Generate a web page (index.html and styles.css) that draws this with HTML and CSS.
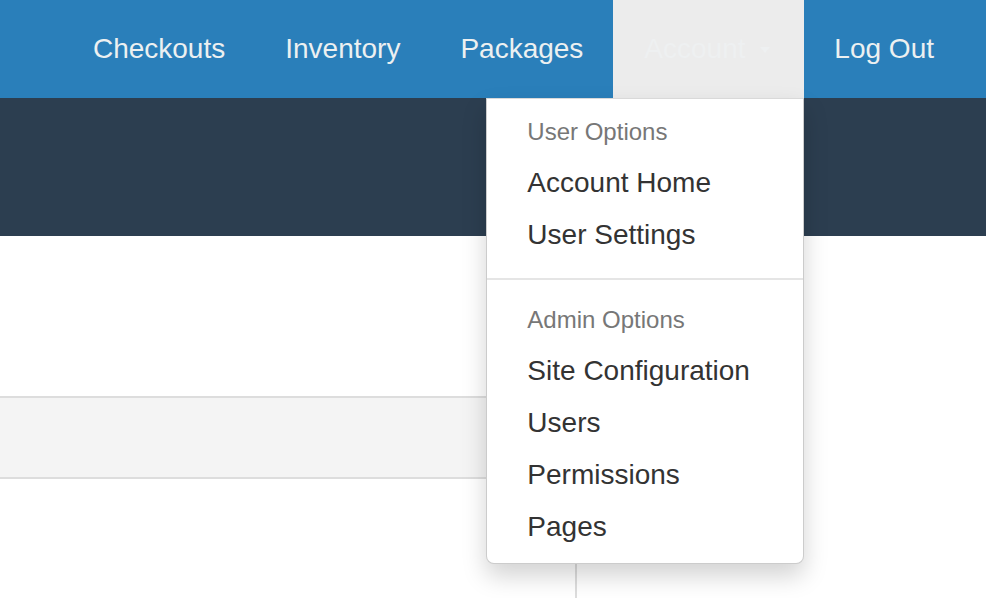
FILE: index.html
```html
<!DOCTYPE html>
<html lang="en">
<head>
<meta charset="utf-8">
<title>Account</title>
<link rel="stylesheet" href="styles.css">
</head>
<body>
<nav class="navbar">
  <ul class="nav">
    <li class="nav-item"><a class="nav-link" href="#">Checkouts</a></li>
    <li class="nav-item"><a class="nav-link" href="#">Inventory</a></li>
    <li class="nav-item"><a class="nav-link" href="#">Packages</a></li>
    <li class="nav-item dropdown">
      <a class="nav-link active" href="#">Account <span class="caret"></span></a>
      <ul class="dropdown-menu">
        <li class="dropdown-header">User Options</li>
        <li><a class="dropdown-item" href="#">Account Home</a></li>
        <li><a class="dropdown-item" href="#">User Settings</a></li>
        <li class="divider"></li>
        <li class="dropdown-header">Admin Options</li>
        <li><a class="dropdown-item" href="#">Site Configuration</a></li>
        <li><a class="dropdown-item" href="#">Users</a></li>
        <li><a class="dropdown-item" href="#">Permissions</a></li>
        <li><a class="dropdown-item" href="#">Pages</a></li>
      </ul>
    </li>
    <li class="nav-item"><a class="nav-link" href="#">Log Out</a></li>
  </ul>
</nav>
<header class="hero"></header>
<main class="content">
  <div class="table">
    <div class="table-head"></div>
    <div class="table-body">
      <div class="cell"></div>
      <div class="cell cell-right"></div>
    </div>
  </div>
</main>
</body>
</html>
```

FILE: styles.css
```css
* { box-sizing: border-box; }
html, body { margin: 0; padding: 0; }
body {
  font-family: "Liberation Sans", Arial, Helvetica, sans-serif;
  background: #ffffff;
  color: #333333;
  overflow: hidden;
  height: 598px;
}
.navbar {
  height: 98px;
  background: #2a7fba;
  display: flex;
  justify-content: flex-end;
  padding-right: 22px;
}
.nav {
  list-style: none;
  margin: 0;
  padding: 0;
  display: flex;
  height: 98px;
}
.nav-item { position: relative; }
.nav-link {
  display: flex;
  align-items: center;
  height: 98px;
  padding: 0 30px 0 30px;
  font-size: 28px;
  color: #ecf0f1;
  text-decoration: none;
  white-space: nowrap;
}
.nav-link.active {
  background: #ececec;
  color: #eef0f1;
  width: 191px;
  padding-left: 31px;
}
.caret {
  display: inline-block;
  width: 0;
  height: 0;
  margin-left: 14px;
  margin-top: 2px;
  border-top: 6px solid #eef0f1;
  border-left: 5px solid transparent;
  border-right: 5px solid transparent;
}
.hero {
  height: 138px;
  background: #2c3e50;
}
.content { padding-top: 160px; }
.table { width: 986px; }
.table-head {
  width: 600px;
  height: 83px;
  background: #f4f4f4;
  border-top: 2px solid #dddddd;
  border-bottom: 2px solid #dddddd;
}
.table-body {
  display: grid;
  grid-template-columns: 575px 1fr;
  height: 119px;
}
.cell-right { border-left: 2px solid #dddddd; }
.dropdown-menu {
  position: absolute;
  top: 98px;
  right: 0;
  width: 318px;
  list-style: none;
  margin: 0;
  padding: 10px 0;
  background: #ffffff;
  border: 1px solid rgba(0, 0, 0, 0.2);
  border-top: 1px solid rgba(0, 0, 0, 0.15);
  border-radius: 0 0 8px 8px;
  box-shadow: 0 12px 24px rgba(0, 0, 0, 0.175);
  z-index: 10;
}
.dropdown-header {
  padding: 6px 40px 8px 40px;
  font-size: 24px;
  line-height: 34px;
  color: #777777;
}
.dropdown-item {
  display: block;
  padding: 6px 40px 6px 40px;
  font-size: 28px;
  line-height: 40px;
  color: #333333;
  text-decoration: none;
  white-space: nowrap;
}
.divider {
  height: 2px;
  margin: 17px 0 17px;
  background: #e5e5e5;
}
```
